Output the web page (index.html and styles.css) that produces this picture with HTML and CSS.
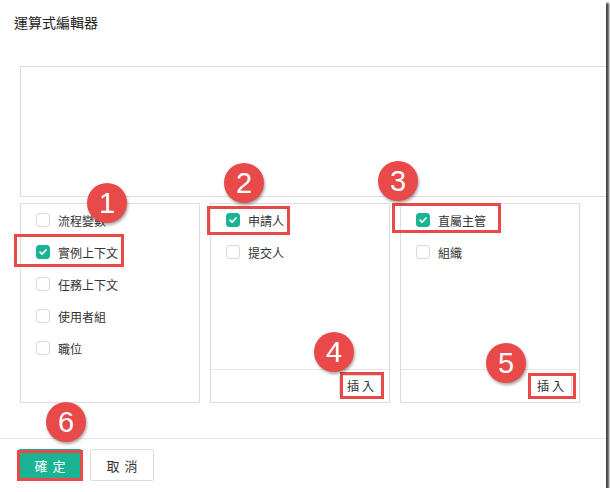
FILE: index.html
```html
<!DOCTYPE html>
<html lang="zh-Hant">
<head>
<meta charset="utf-8">
<link rel="stylesheet" href="styles.css">
</head>
<body>
<div class="frame">
  <div class="dialog">
    <header class="dlg-header"><h1 class="dlg-title">運算式編輯器</h1></header>
    <section class="dlg-body">
      <div class="expr-box"></div>
      <div class="panels">
        <div class="panel">
          <ul class="items">
            <li class="item"><span class="cb"></span><span>流程變數</span></li>
            <li class="item"><span class="cb on"><svg viewBox="0 0 14 14"><path d="M3.6 7.2l2.3 2.3 4.6-4.8" /></svg></span><span>實例上下文</span></li>
            <li class="item"><span class="cb"></span><span>任務上下文</span></li>
            <li class="item"><span class="cb"></span><span>使用者組</span></li>
            <li class="item"><span class="cb"></span><span>職位</span></li>
          </ul>
        </div>
        <div class="panel">
          <ul class="items">
            <li class="item"><span class="cb on"><svg viewBox="0 0 14 14"><path d="M3.6 7.2l2.3 2.3 4.6-4.8" /></svg></span><span>申請人</span></li>
            <li class="item"><span class="cb"></span><span>提交人</span></li>
          </ul>
          <div class="panel-foot"><button class="btn-insert">插入</button></div>
        </div>
        <div class="panel">
          <ul class="items">
            <li class="item"><span class="cb on"><svg viewBox="0 0 14 14"><path d="M3.6 7.2l2.3 2.3 4.6-4.8" /></svg></span><span>直屬主管</span></li>
            <li class="item"><span class="cb"></span><span>組織</span></li>
          </ul>
          <div class="panel-foot"><button class="btn-insert">插入</button></div>
        </div>
      </div>
    </section>
    <footer class="dlg-footer">
      <button class="btn btn-primary">確定</button>
      <button class="btn btn-default">取消</button>
    </footer>
  </div>

  <div class="mark m1"></div>
  <div class="mark m2"></div>
  <div class="mark m3"></div>
  <div class="mark m4"></div>
  <div class="mark m5"></div>
  <div class="mark m6"></div>

  <div class="badge b1">1</div>
  <div class="badge b2">2</div>
  <div class="badge b3">3</div>
  <div class="badge b4">4</div>
  <div class="badge b5">5</div>
  <div class="badge b6">6</div>
</div>
</body>
</html>
```

FILE: styles.css
```css
html, body {
  margin: 0;
  padding: 0;
  background: #ffffff;
}

.frame {
  position: relative;
  width: 606px;
  height: 488px;
  overflow: hidden;
  background: #ffffff;
  box-shadow: 3px 3px 2px rgba(0, 0, 0, 0.72);
  font-family: "Noto Sans CJK TC", "Liberation Sans", sans-serif;
  color: #333333;
}

.dialog {
  display: flex;
  flex-direction: column;
  height: 100%;
}

.dlg-header {
  height: 66px;
  box-sizing: border-box;
  padding: 11px 0 0 14px;
}

.dlg-title {
  margin: 0;
  font-size: 14px;
  font-weight: normal;
  line-height: 22px;
  color: #222222;
}

.dlg-body {
  padding-left: 20px;
  height: 372px;
  box-sizing: border-box;
}

.expr-box {
  width: 640px;
  height: 131px;
  box-sizing: border-box;
  border: 1px solid #dddddd;
}

.panels {
  display: flex;
  gap: 10px;
  margin-top: 6px;
}

.panel {
  width: 180px;
  height: 200px;
  box-sizing: border-box;
  border: 1px solid #dddddd;
  display: flex;
  flex-direction: column;
}

.items {
  list-style: none;
  margin: 0;
  padding: 0;
  flex: 1;
}

.item {
  display: flex;
  align-items: center;
  height: 32px;
  padding-left: 15px;
  font-size: 12px;
  color: #333333;
}

.cb {
  width: 14px;
  height: 14px;
  box-sizing: border-box;
  border: 1px solid #d9d9d9;
  border-radius: 3px;
  background: #ffffff;
  margin-right: 8px;
  flex: none;
  display: flex;
}

.cb.on {
  background: #1ab394;
  border-color: #1ab394;
}

.cb svg {
  width: 12px;
  height: 12px;
  fill: none;
  stroke: #ffffff;
  stroke-width: 2;
  stroke-linecap: round;
  stroke-linejoin: round;
}

.panel-foot {
  height: 33px;
  box-sizing: border-box;
  border-top: 1px solid #e5e5e5;
  display: flex;
  align-items: center;
  justify-content: flex-end;
  padding-right: 7px;
}

.btn-insert {
  font-family: inherit;
  font-size: 12px;
  letter-spacing: 3px;
  color: #333333;
  background: #ffffff;
  border: 1px solid #dddddd;
  border-radius: 2px;
  height: 22px;
  padding: 0 4px 0 7px;
  line-height: 20px;
}

.dlg-footer {
  border-top: 1px solid #e5e5e5;
  display: flex;
  gap: 8px;
  padding: 10px 0 0 18px;
  flex: 1;
}

.btn {
  font-family: inherit;
  font-size: 13px;
  letter-spacing: 5px;
  width: 64px;
  height: 32px;
  padding: 0 0 0 5px;
  border-radius: 2px;
  box-sizing: border-box;
}

.btn-primary {
  background: #1ab394;
  border: 1px solid #1ab394;
  color: #ffffff;
}

.btn-default {
  background: #ffffff;
  border: 1px solid #dddddd;
  color: #333333;
}

/* annotation overlays */
.mark {
  position: absolute;
  border: 3px solid #e84a4a;
  box-sizing: border-box;
}

.m1 { left: 14px;  top: 234px; width: 110px; height: 33px; }
.m2 { left: 207px; top: 206px; width: 83px;  height: 29px; }
.m3 { left: 392px; top: 203px; width: 109px; height: 30px; }
.m4 { left: 340px; top: 372px; width: 44px;  height: 27px; }
.m5 { left: 528px; top: 373px; width: 48px;  height: 26px; }
.m6 { left: 17px;  top: 450px; width: 66px;  height: 31px; }

.badge {
  position: absolute;
  width: 40px;
  height: 40px;
  border-radius: 50%;
  background: #e84a4a;
  color: #ffffff;
  font-family: "Liberation Sans", Arial, sans-serif;
  font-size: 29px;
  line-height: 40px;
  text-align: center;
  box-shadow: 1px 2px 3px rgba(0, 0, 0, 0.35);
}

.b1 { left: 87px;  top: 183px; }
.b2 { left: 224px; top: 163px; }
.b3 { left: 378px; top: 161px; }
.b4 { left: 314px; top: 332px; }
.b5 { left: 486px; top: 343px; }
.b6 { left: 46px;  top: 402px; }
```
